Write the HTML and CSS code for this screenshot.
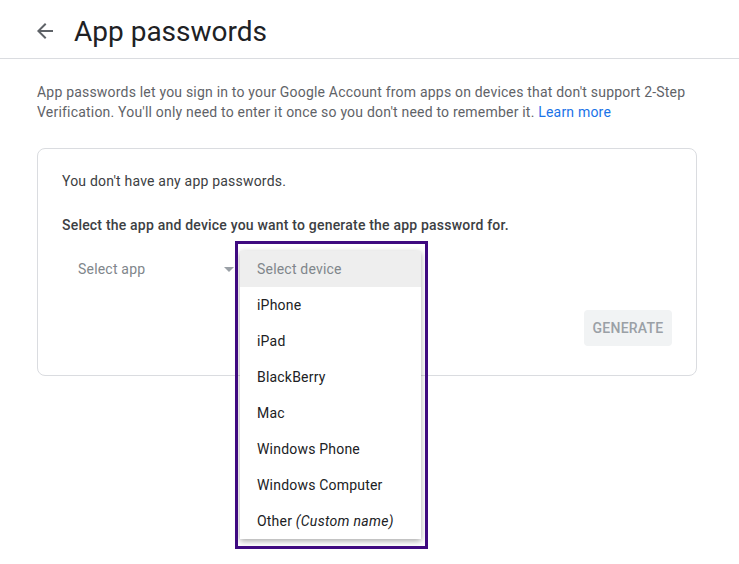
FILE: index.html
```html
<!DOCTYPE html>
<html lang="en">
<head>
  <meta charset="UTF-8">
  <meta name="viewport" content="width=device-width, initial-scale=1.0">
  <title>App passwords</title>
  <link rel="stylesheet" href="styles.css">
</head>
<body>
  <div class="header">
    <a href="#" class="back" aria-label="Back">
      <svg width="24" height="24" viewBox="0 0 24 24"><path d="M20 11H7.83l5.59-5.59L12 4l-8 8 8 8 1.41-1.41L7.83 13H20v-2z" fill="#5f6368"/></svg>
    </a>
    <h1 class="title">App passwords</h1>
  </div>

  <div class="content">
    <p class="intro">App passwords let you sign in to your Google Account from apps on devices that don't support 2-Step Verification. You'll only need to enter it once so you don't need to remember it. <a href="#">Learn more</a></p>

    <div class="card">
      <div class="none">You don't have any app passwords.</div>
      <div class="prompt">Select the app and device you want to generate the app password for.</div>

      <div class="select-row">
        <div class="select">
          <span>Select app</span>
          <span class="caret"></span>
        </div>
        <div class="device">
          <ul class="menu">
            <li class="placeholder">Select device</li>
            <li>iPhone</li>
            <li>iPad</li>
            <li>BlackBerry</li>
            <li>Mac</li>
            <li>Windows Phone</li>
            <li>Windows Computer</li>
            <li>Other <em>(Custom name)</em></li>
          </ul>
          <div class="highlight"></div>
        </div>
      </div>

      <div class="actions">
        <button class="generate" disabled>Generate</button>
      </div>
    </div>
  </div>
</body>
</html>
```

FILE: styles.css
```css
/* GENERAL */
html, body {
  min-height: 100vh;
}

body {
  margin: 0;
  font-family: Roboto, 'Liberation Sans', sans-serif;
  background: #fff;
  color: #3c4043;
}

.header {
  height: 54px;
  padding-top: 4px;
  border-bottom: 1px solid #dadce0;
  display: flex;
  align-items: center;
  padding-left: 33px;
}

.back {
  display: flex;
  width: 24px;
  height: 24px;
  margin-right: 17px;
}

.title {
  margin: 0;
  font-size: 28px;
  font-weight: 400;
  color: #202124;
}

.content {
  padding: 0 42px 0 37px;
}

.intro {
  margin: 23px 0 0;
  font-size: 14px;
  line-height: 20px;
  letter-spacing: 0.2px;
  color: #5f6368;
}

.intro a {
  color: #1a73e8;
  text-decoration: none;
}

/* card */
.card {
  margin-top: 26px;
  border: 1px solid #dadce0;
  border-radius: 8px;
  padding: 22px 24px 29px 24px;
  font-size: 14px;
  line-height: 20px;
  letter-spacing: 0.2px;
}

.prompt {
  margin-top: 24px;
  font-weight: 500;
  color: #3c4043;
}

.select-row {
  display: flex;
  margin-top: 16px;
}

.select {
  width: 178px;
  height: 36px;
  display: flex;
  align-items: center;
  justify-content: space-between;
  padding-left: 16px;
  box-sizing: border-box;
  color: #80868b;
}

.caret {
  width: 0;
  height: 0;
  border-left: 5px solid transparent;
  border-right: 5px solid transparent;
  border-top: 5px solid #9aa0a6;
  margin-right: 6px;
}

.device {
  position: relative;
  width: 181px;
  height: 36px;
}

/* open dropdown */
.menu {
  position: absolute;
  top: 0;
  left: 0;
  width: 181px;
  margin: 0;
  padding: 0;
  list-style: none;
  background: #fff;
  box-shadow: 0 2px 6px rgba(0, 0, 0, 0.35);
  z-index: 2;
}

.menu li {
  height: 36px;
  line-height: 36px;
  padding-left: 17px;
  color: #202124;
}

.menu li.placeholder {
  background: #eeeeee;
  color: #80868b;
}

.menu em {
  font-style: italic;
  letter-spacing: 0.3px;
}

.highlight {
  position: absolute;
  top: -10px;
  left: -5px;
  right: -7px;
  height: 308px;
  border: 3px solid #3f0a80;
  box-sizing: border-box;
  z-index: 3;
}

.actions {
  display: flex;
  justify-content: flex-end;
  margin-top: 23px;
}

.generate {
  width: 88px;
  height: 36px;
  border: none;
  border-radius: 4px;
  background: #f1f3f4;
  color: #9aa0a6;
  font-family: Roboto, 'Liberation Sans', sans-serif;
  font-size: 14px;
  font-weight: 500;
  letter-spacing: 0.25px;
  text-transform: uppercase;
}
```
